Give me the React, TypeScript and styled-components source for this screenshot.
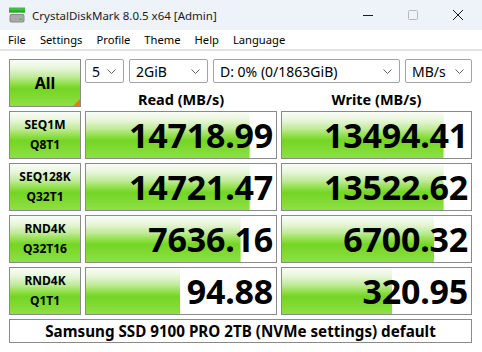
import React from 'react';
import styled, { createGlobalStyle } from 'styled-components';

const Global = createGlobalStyle`
  html, body { margin: 0; padding: 0; background: #ffffff; }
  body {
    width: 482px;
    height: 352px;
    overflow: hidden;
    font-family: "Noto Sans", "Open Sans", sans-serif;
  }
`;

const GREEN = `linear-gradient(180deg, #fafdf7 0%, #e6f6d8 18%, #c2eb9c 36%, #8fdf48 52%, #74d624 62%, #80da32 80%, #8fdf44 100%)`;

const Window = styled.div`
  width: 482px;
  height: 352px;
  display: flex;
  flex-direction: column;
  background: #ffffff;
`;

const TitleBar = styled.div`
  height: 30px;
  background: #eef2f9;
  display: flex;
  align-items: center;
  padding-left: 9px;
  padding-right: 2px;
`;

const TitleText = styled.span`
  flex: 1;
  margin-left: 7px;
  font-size: 11.5px;
  color: #1b1b1b;
  white-space: nowrap;
`;

const WinButtons = styled.div`
  display: flex;
  height: 30px;
`;

const WinBtn = styled.div`
  width: 45px;
  height: 30px;
  display: flex;
  align-items: center;
  justify-content: center;
`;

const MenuBar = styled.div`
  height: 19px;
  display: flex;
  align-items: center;
  padding-left: 1px;
  border-bottom: 2px solid #e2e2e2;
  background: #ffffff;
`;

const MenuItem = styled.span`
  padding: 0 7px;
  font-size: 11.2px;
  color: #000;
  line-height: 19px;
`;

const Main = styled.div`
  padding: 8px 10px 0 9px;
  display: grid;
  grid-template-columns: 72px 192px 191px;
  grid-template-rows: 48px 48px 48px 48px 48px 24px;
  column-gap: 4px;
  row-gap: 4px;
`;

const AllButton = styled.div`
  position: relative;
  box-sizing: border-box;
  border: 1px solid #8a8a8a;
  background: ${GREEN};
  display: flex;
  align-items: center;
  justify-content: center;
  font-size: 16px;
  font-weight: 700;
  color: #000;
`;

const Corner = styled.span`
  position: absolute;
  right: 0;
  bottom: 0;
  width: 0;
  height: 0;
  border-left: 7px solid transparent;
  border-bottom: 7px solid #f07a12;
`;

const TopRight = styled.div`
  grid-column: 2 / 4;
  display: flex;
  flex-direction: column;
`;

const SelectRow = styled.div`
  display: flex;
  gap: 5px;
  height: 24px;
`;

const SelectBox = styled.div<{ $w: number }>`
  box-sizing: border-box;
  width: ${(p) => p.$w}px;
  height: 24px;
  border: 1px solid #a3a3a3;
  border-radius: 2px;
  background: #fff;
  display: flex;
  align-items: center;
  padding: 0 7px 0 6px;
  font-size: 14px;
  color: #000;
`;

const SelectText = styled.span`
  flex: 1;
  white-space: nowrap;
  overflow: hidden;
`;

const HeaderRow = styled.div`
  display: grid;
  grid-template-columns: 192px 191px;
  column-gap: 4px;
  height: 24px;
`;

const Header = styled.div`
  text-align: center;
  font-size: 14.5px;
  font-weight: 700;
  line-height: 22px;
  padding-top: 5px;
  color: #000;
`;

const LabelCell = styled.div`
  box-sizing: border-box;
  border: 1px solid #8a8a8a;
  background: ${GREEN};
  display: flex;
  flex-direction: column;
  align-items: center;
  justify-content: center;
  font-size: 12px;
  font-weight: 700;
  line-height: 20px;
  color: #000;
`;

const ValueCell = styled.div`
  box-sizing: border-box;
  border: 1px solid #8a8a8a;
  background-color: #ffffff;
  background-image: ${GREEN};
  background-repeat: no-repeat;
  display: flex;
  align-items: center;
  justify-content: flex-end;
  padding-right: 3px;
  font-size: 34px;
  font-weight: 700;
  color: #000;
  letter-spacing: -0.2px;
  line-height: 1;
`;

const Comment = styled.div`
  grid-column: 1 / 4;
  box-sizing: border-box;
  border: 1px solid #8a8a8a;
  background: #fff;
  display: flex;
  align-items: center;
  justify-content: center;
  font-size: 15.2px;
  font-weight: 700;
  color: #000;
`;

const Chevron = () => (
  <svg width="9" height="5" viewBox="0 0 9 5">
    <polyline points="0.5,0.5 4.5,4.5 8.5,0.5" fill="none" stroke="#606060" strokeWidth="1" />
  </svg>
);

const AppIcon = () => (
  <svg width="16" height="16" viewBox="0 0 16 16">
    <rect x="0" y="0.5" width="16" height="5" fill="#3fbf3a" />
    <rect x="0" y="3.5" width="16" height="2" fill="#2ea52b" />
    <rect x="0.5" y="7" width="15" height="8.5" rx="2" fill="#8c8c8c" />
    <rect x="1.5" y="8" width="13" height="6.5" rx="1.5" fill="#a9a9a9" />
    <rect x="10" y="11.5" width="3" height="1.5" fill="#45c83c" />
  </svg>
);

type Row = { l1: string; l2: string; read: string; write: string };

const rows: Row[] = [
  { l1: 'SEQ1M', l2: 'Q8T1', read: '14718.99', write: '13494.41' },
  { l1: 'SEQ128K', l2: 'Q32T1', read: '14721.47', write: '13522.62' },
  { l1: 'RND4K', l2: 'Q32T16', read: '7636.16', write: '6700.32' },
  { l1: 'RND4K', l2: 'Q1T1', read: '94.88', write: '320.95' },
];

const barSize = (v: string) => {
  const n = parseFloat(v);
  const f = Math.max(0, Math.min(1, (1 + Math.log10(n)) / 6));
  return `${(f * 100).toFixed(2)}% 100%`;
};

export default function App() {
  return (
    <Window>
      <Global />
      <TitleBar>
        <AppIcon />
        <TitleText>CrystalDiskMark 8.0.5 x64 [Admin]</TitleText>
        <WinButtons>
          <WinBtn>
            <svg width="10" height="10" viewBox="0 0 10 10">
              <line x1="0" y1="5.5" x2="10" y2="5.5" stroke="#1b1b1b" strokeWidth="1" />
            </svg>
          </WinBtn>
          <WinBtn>
            <svg width="10" height="10" viewBox="0 0 10 10">
              <rect x="0.5" y="0.5" width="9" height="9" rx="1" fill="none" stroke="#b8b8b8" strokeWidth="1" />
            </svg>
          </WinBtn>
          <WinBtn>
            <svg width="10" height="10" viewBox="0 0 10 10">
              <line x1="0" y1="0" x2="10" y2="10" stroke="#1b1b1b" strokeWidth="1" />
              <line x1="10" y1="0" x2="0" y2="10" stroke="#1b1b1b" strokeWidth="1" />
            </svg>
          </WinBtn>
        </WinButtons>
      </TitleBar>
      <MenuBar>
        {['File', 'Settings', 'Profile', 'Theme', 'Help', 'Language'].map((m) => (
          <MenuItem key={m}>{m}</MenuItem>
        ))}
      </MenuBar>
      <Main>
        <AllButton>
          All
          <Corner />
        </AllButton>
        <TopRight>
          <SelectRow>
            <SelectBox $w={39}>
              <SelectText>5</SelectText>
              <Chevron />
            </SelectBox>
            <SelectBox $w={79}>
              <SelectText>2GiB</SelectText>
              <Chevron />
            </SelectBox>
            <SelectBox $w={187}>
              <SelectText>D: 0% (0/1863GiB)</SelectText>
              <Chevron />
            </SelectBox>
            <SelectBox $w={67}>
              <SelectText>MB/s</SelectText>
              <Chevron />
            </SelectBox>
          </SelectRow>
          <HeaderRow>
            <Header>Read (MB/s)</Header>
            <Header>Write (MB/s)</Header>
          </HeaderRow>
        </TopRight>
        {rows.map((r, i) => (
          <React.Fragment key={i}>
            <LabelCell>
              <span>{r.l1}</span>
              <span>{r.l2}</span>
            </LabelCell>
            <ValueCell style={{ backgroundSize: barSize(r.read) }}>{r.read}</ValueCell>
            <ValueCell style={{ backgroundSize: barSize(r.write) }}>{r.write}</ValueCell>
          </React.Fragment>
        ))}
        <Comment>Samsung SSD 9100 PRO 2TB (NVMe settings) default</Comment>
      </Main>
    </Window>
  );
}
